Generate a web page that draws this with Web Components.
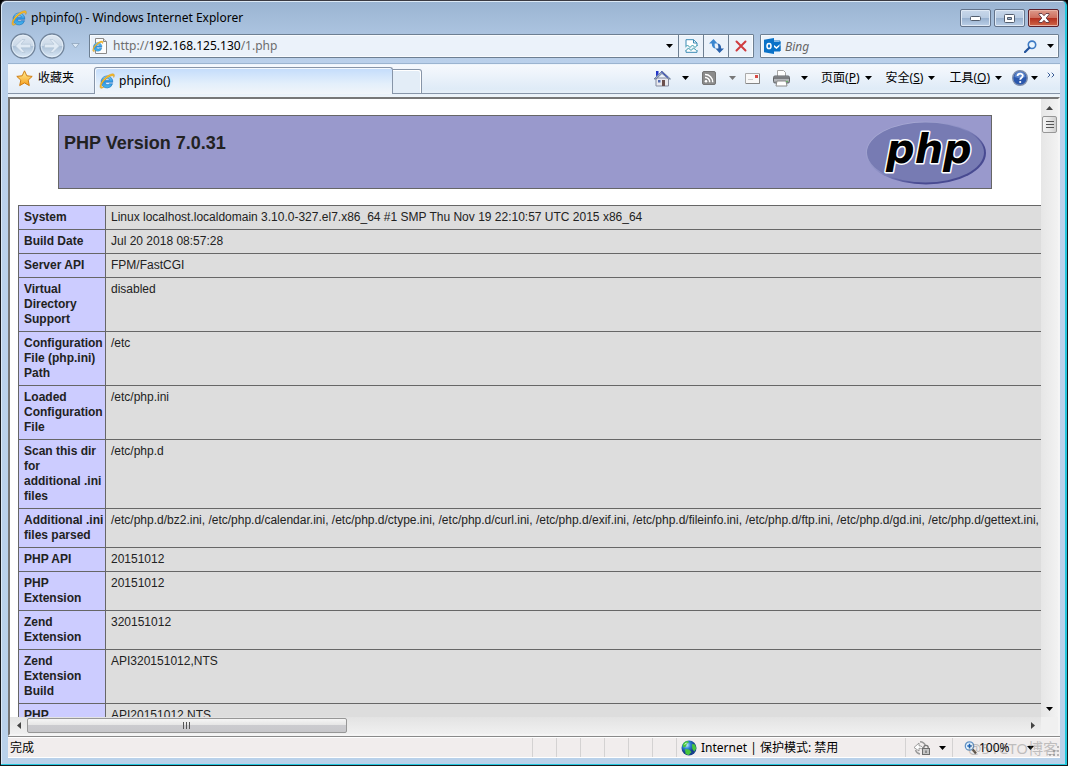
<!DOCTYPE html>
<html lang="zh-CN">
<head>
<meta charset="utf-8">
<title>phpinfo() - Windows Internet Explorer</title>
<style>
html, body { margin: 0; height: 100%; overflow: hidden; }
body { font: 12px/16px "Noto Sans", "Noto Sans CJK SC", sans-serif; color: #000; background: #000; }
</style>
</head>
<body>
<browser-window>
  <title-bar slot="title">phpinfo() - Windows Internet Explorer</title-bar>
  <nav-bar slot="nav"></nav-bar>
  <command-bar slot="commands"></command-bar>
  <scroll-view slot="view"><php-info></php-info></scroll-view>
  <status-bar slot="status"></status-bar>
</browser-window>
<script>
const IE = `<path d="M2.2 10.2a5.9 5.9 0 1 1 11.6-.9H6.2c.2 1.5 1.1 2.3 2.4 2.3.8 0 1.4-.3 1.8-.9h3.2A5.9 5.9 0 0 1 8.3 15C5 15 2.700 13 2.200 10.200zM6.200 7.200h4.200C10.200 6 9.400 5.300 8.300 5.300S6.400 6 6.200 7.200z" fill="url(#ie)" stroke="#1565b4" stroke-width=".5"/><path d="M1.700 15.200C-.5 13.500 2.500 7 7.500 3.500 11.200.8 14.700.1 15.300 1.700c.3.700 0 1.700-.6 2.800.2-1-.1-1.700-1-1.800-1.600-.2-4.200 1.100-6.700 3.200C4 8.500 1.600 12.300 2.500 13.800c.4.600 1.300.5 2.600-.1-1.400 1.200-2.700 1.900-3.400 1.500z" fill="#f8bd2c" stroke="#c78a13" stroke-width=".4"/><defs><linearGradient id="ie" x2="0" y2="1"><stop stop-color="#7bd3fa"/><stop offset=".5" stop-color="#2a94e2"/><stop offset="1" stop-color="#49b9ee"/></linearGradient></defs>`;
const CIRCLE = `<defs><linearGradient id="b" x2="0" y2="1"><stop stop-color="#dfe8f2"/><stop offset=".48" stop-color="#cbd9e8"/><stop offset=".52" stop-color="#adc2d8"/><stop offset="1" stop-color="#dceaf7"/></linearGradient></defs><circle cx="13" cy="13" r="12" fill="url(#b)" stroke="#71849b" stroke-width="1.300"/><circle cx="13" cy="13" r="10.800" fill="none" stroke="#edf5fc" opacity=".7"/>`;
const ICONS = {
  ie: [16, 16, IE],
  page: [16, 16, `<path d="M3.500.500h8l3 3v12h-11z" fill="#fdfdfd" stroke="#8a8a8a"/><path d="M11.500.500v3h3" fill="#ddd" stroke="#8a8a8a"/><g transform="translate(0 2.500) scale(.72)">${IE}</g>`],
  back: [26, 26, `${CIRCLE}<path d="M5.500 13l6.500-6.500h3l-4 4.700h9.500v3.600H11l4 4.700h-3z" fill="#e0eaf4" stroke="#b4c5d7" stroke-width=".7"/>`],
  forward: [26, 26, `${CIRCLE}<path d="M20.500 13L14 6.500h-3l4 4.700H5.500v3.600H15l-4 4.700h3z" fill="#e0eaf4" stroke="#b4c5d7" stroke-width=".7"/>`],
  recent: [9, 6, `<path d="M.8.500h7.400L4.500 5z" fill="#dce9f6" stroke="#8fa5bd" stroke-width=".8"/>`],
  down: [7, 4, `<path d="M0 0h7L3.500 4z" fill="currentColor"/>`],
  compat: [13, 14, `<path d="M1 7V.700h7.500L12 4v3M1 11v2.300h11V11" fill="#fff" stroke="#3b8ab4"/><path d="M8.500.700V4H12" fill="none" stroke="#3b8ab4"/><path d="M0 8.500L2.500 6 5 8.500 7.500 6 10 8.500l2.500-2.500M1 11.500L3.500 9 6 11.500 8.500 9l3 2.500" fill="none" stroke="#3b9cab"/>`],
  refresh: [15, 14, `<path d="M4.500 0L0 4.500h2.800C2.800 8 4.200 9.500 7 9.500 5.600 8.300 5.500 6.500 5.700 4.500H8.500z" fill="#3b86cf"/><path d="M10.500 14l4.500-4.500h-2.800C12.200 6 10.800 4.500 8 4.500c1.400 1.200 1.500 3 1.300 5H6.500z" fill="#2a62ac"/>`],
  stop: [12, 12, `<path d="M1.500 1.500l9 9M10.500 1.500l-9 9" stroke="#cf3b3f" stroke-width="2" stroke-linecap="round"/>`],
  outlook: [17, 16, `<path d="M9 3h7v10H9z" fill="#fff" stroke="#0a72c8"/><path d="M10 4h6.500v1.500L12.500 9 10 7z" fill="#0a72c8"/><path d="M10 9l2.500 2 4-3.500V13H10z" fill="#0a72c8"/><path d="M0 1.800L10 0v16L0 14.200z" fill="#0a72c8"/><ellipse cx="5" cy="8" rx="2" ry="2.600" fill="none" stroke="#fff" stroke-width="1.500"/>`],
  search: [13, 13, `<circle cx="8" cy="4.800" r="3.700" fill="#eaf6ff" stroke="#3d7ac4" stroke-width="1.600"/><path d="M5.300 7.700L1 12" stroke="#22539b" stroke-width="2.200" stroke-linecap="round"/>`],
  star: [17, 17, `<path d="M8.500.800l2.300 5 5.400.6-4 3.700 1.100 5.500-4.800-2.700-4.800 2.700 1.100-5.500-4-3.700 5.400-.6z" fill="url(#s)" stroke="#cf7d12" stroke-width="1"/><defs><linearGradient id="s" x2="0" y2="1"><stop stop-color="#fff19a"/><stop offset="1" stop-color="#f69d19"/></linearGradient></defs>`],
  home: [18, 17, `<path d="M3 8h12.500v8H3z" fill="#e9e9ee" stroke="#858b9f"/><path d="M9 1L1 9h2l6-5.500L15.500 9h2z" fill="#9dabc9" stroke="#596887" stroke-width=".7"/><path d="M3 1h2.500v3L3 6.500z" fill="#2337c8"/><path d="M9 10h3v6H9z" fill="#6b504e"/><path d="M5 10h2.500v2.500H5z" fill="#526ab0"/><path d="M8 1.500l7 6" stroke="#3246bb"/>`],
  rss: [14, 14, `<rect x=".5" y=".5" width="13" height="13" rx="1.500" fill="#8b8b8b" stroke="#757575"/><circle cx="4" cy="10.200" r="1.300" fill="#fff"/><path d="M3 6.500a4.500 4.500 0 0 1 4.700 4.700M3 3.500a7.500 7.500 0 0 1 7.700 7.700" fill="none" stroke="#fff" stroke-width="1.500"/>`],
  mail: [15, 11, `<path d="M.500.500h14v10H.500z" fill="#f8f8f8" stroke="#aaa"/><path d="M1 10.500h13.500V1" fill="none" stroke="#858585"/><path d="M10 2h3v3h-3z" fill="#d94b45"/><path d="M3 6.500h5" stroke="#ccc"/>`],
  printer: [17, 17, `<path d="M4.500 7V.500h6l2 2V7" fill="#fff" stroke="#a5a5a5"/><rect x=".5" y="6" width="16" height="7" rx="1.500" fill="#9a9da1" stroke="#606468"/><path d="M1 8h15" stroke="#5a5c60"/><path d="M1 10h15" stroke="#c9ccd0"/><path d="M4 11h9l1 5H3z" fill="#fff" stroke="#8a8a8a"/><circle cx="14" cy="11.500" r=".8" fill="#53ba51"/>`],
  help: [16, 16, `<circle cx="8" cy="8" r="7.300" fill="#2a57ad" stroke="#7e8eac" stroke-width="1.400"/><path d="M2.500 7a5.500 5.500 0 0 1 11 0q-5 2-11 0z" fill="#7fa5e2" opacity=".6"/><path d="M5.500 6c.2-3 5.300-3 5.300-.2C10.800 7.700 8.200 7.700 8.200 9.800" fill="none" stroke="#fff" stroke-width="1.800"/><circle cx="8.200" cy="12" r="1.100" fill="#fff"/>`],
  more: [8, 6, `<path d="M.700.700L3 3 .700 5.300M4.700.700L7 3 4.700 5.300" fill="none" stroke="#3c5d96"/>`],
  min: [11, 5, `<rect x=".5" y=".5" width="10" height="4" rx="1" fill="#fff" stroke="#525d6d"/>`],
  max: [11, 9, `<rect x=".5" y=".5" width="10" height="8" rx="1" fill="#fff" stroke="#525d6d"/><path d="M3.500 3.500h4v2h-4z" fill="#9fb4cc" stroke="#525d6d"/>`],
  close: [12, 10, `<path d="M1 .500h3l2 2.200 2-2.200h3v1.200L8.200 5 11 8.300v1.200H8L6 7.300 4 9.500H1V8.300L3.800 5 1 1.700z" fill="#fff" stroke="#5b3540" stroke-width=".9"/>`],
  globe: [16, 16, `<defs><radialGradient id="g" cx=".35" cy=".3"><stop stop-color="#c9f0ff"/><stop offset=".5" stop-color="#2e83d3"/><stop offset="1" stop-color="#17408d"/></radialGradient></defs><circle cx="8" cy="8" r="7.500" fill="url(#g)"/><path d="M1.500 5c1-2.500 3-4 5.500-4l1 1.500-2 1-1 3-2.500 1zM11 4l3 .5 1.300 4-2 3-2-2.500zM4 9l4 .5 2.500 2.500-3 3.200-3-1.500z" fill="#48c63c"/><path d="M3 5c.7-1.500 2-2.500 3.500-2.500L5 4z" fill="#e5ffe0"/>`],
  lock: [17, 14, `<path d="M6 .800a6 6 0 0 1 5.500 4M6 13A6 6 0 0 1 1.500 9" fill="none" stroke="#9a9a9a" stroke-width="1.400"/><path d="M0 6.500L5 2v2.800c3 0 4 1.500 4 4-1.200-1.300-2.300-1.600-4-1.500V10z" fill="#fff" stroke="#888" stroke-width=".8"/><path d="M9.800 8V6.500a2.200 2.200 0 0 1 4.400 0V8" fill="none" stroke="#777" stroke-width="1.300"/><rect x="8.500" y="7.500" width="7" height="6" fill="#c4c4c4" stroke="#6d6d6d"/><path d="M12 9.500v2.500" stroke="#555"/>`],
  zoom: [13, 14, `<circle cx="5.500" cy="5" r="4.200" fill="#e6f4ff" stroke="#6593c4" stroke-width="1.300"/><path d="M3.300 5h4.400M5.500 2.800v4.400" stroke="#1b61b8" stroke-width="1.500"/><path d="M8.700 8.500L12 12.500" stroke="#5c5146" stroke-width="2.300"/>`],
  left: [4, 7, `<path d="M4 0v7L0 3.500z" fill="#444"/>`],
  right: [4, 7, `<path d="M0 0v7l4-3.500z" fill="#444"/>`],
  up: [7, 4, `<path d="M0 4h7L3.500 0z" fill="#444"/>`],
  grip: [12, 12, `<path d="M9 0h2v2H9zM9 4h2v2H9zM9 8h2v2H9zM5 4h2v2H5zM5 8h2v2H5zM1 8h2v2H1z" fill="#b9b6b6"/>`],
  phplogo: [122, 66, `<defs><linearGradient id="p" x2="1" y2="1"><stop stop-color="#b9badd"/><stop offset=".45" stop-color="#8c8fc4"/><stop offset=".7" stop-color="#484a91"/><stop offset="1" stop-color="#484a91"/></linearGradient></defs><ellipse cx="61" cy="33" rx="60" ry="31.500" fill="url(#p)"/><ellipse cx="60.500" cy="32.500" rx="58.500" ry="30" fill="#777bb3"/><text x="21" y="43" font-family="DejaVu Sans, sans-serif" font-size="40" font-weight="700" font-style="italic" fill="#000" stroke="#fff" stroke-width="3" stroke-linejoin="round" paint-order="stroke">php</text>`]
};

const RESET = `
  :host, *, *::before, *::after { box-sizing: border-box; }
  button { font: inherit; color: inherit; border: 0; background: none; padding: 0; margin: 0; display: flex; align-items: center; justify-content: center; }
`;

class Base extends HTMLElement {
  constructor() {
    super();
    this.attachShadow({ mode: 'open' });
  }
  connectedCallback() {
    this.shadowRoot.innerHTML = `<style>${RESET}${this.styles()}</style>${this.markup()}`;
  }
}

customElements.define('ui-icon', class extends Base {
  styles() { return `:host { display: block; flex: none; line-height: 0; } svg { display: block; }`; }
  markup() {
    const [w, h, body] = ICONS[this.getAttribute('name')];
    return `<svg width="${w}" height="${h}" viewBox="0 0 ${w} ${h}" aria-hidden="true">${body}</svg>`;
  }
});

customElements.define('browser-window', class extends Base {
  styles() { return `
    :host { display: flex; flex-direction: column; height: 100vh;
      padding: 0 7px 7px; border: 1px solid #17191d; border-top-color: #3a3a42; border-radius: 6px 6px 0 0;
      background: linear-gradient(#9ab4d2, #bcd2ec 64px, #b9d1ea);
      box-shadow: inset -2px -1px #22c7dd, inset 1px 1px #dce9f6; }
    main { flex: 1; min-height: 0; display: flex; }
    ::slotted([slot=view]) { flex: 1; min-width: 0; }`; }
  markup() { return `<slot name="title"></slot><slot name="nav"></slot><slot name="commands"></slot><main><slot name="view"></slot></main><slot name="status"></slot>`; }
});

customElements.define('title-bar', class extends Base {
  styles() { return `
    :host { display: flex; align-items: center; height: 32px; padding: 2px 1px 0 3px; gap: 4px; flex: none; }
    h1 { font: inherit; margin: 0; flex: 1; }
    .buttons { display: flex; gap: 3px; }
    .buttons button { width: 31px; height: 18px; border: 1px solid #63738a; border-radius: 2px;
      background: linear-gradient(#c9d8ea, #b8cbe2 48%, #98b1cf 52%, #bcd0e8); box-shadow: inset 0 0 0 1px #dfe9f5; }
    .buttons .close { border-color: #5b1f2a; background: linear-gradient(#dd9a8b, #cf6f5e 48%, #b4301f 52%, #cf6748); box-shadow: inset 0 0 0 1px #e8b2a5; }`; }
  markup() { return `<ui-icon name="ie"></ui-icon><h1><slot></slot></h1>
    <div class="buttons"><button aria-label="Minimize"><ui-icon name="min"></ui-icon></button>
    <button aria-label="Maximize"><ui-icon name="max"></ui-icon></button>
    <button class="close" aria-label="Close"><ui-icon name="close"></ui-icon></button></div>`; }
});

customElements.define('nav-bar', class extends Base {
  styles() { return `
    :host { display: flex; align-items: center; height: 31px; padding: 0 1px 5px 2px; flex: none; }
    .travel { display: flex; align-items: center; gap: 3px; margin-right: 9px; }
    .travel button:last-child { margin-left: 3px; }
    .box { display: flex; height: 24px; border: 1px solid #6d7f92; background: #ebf2fa; box-shadow: inset 0 0 0 1px #f8fbfe; border-radius: 1px; }
    .address { flex: 1; min-width: 0; margin-right: 6px; align-items: center; padding-left: 2px; }
    .address button { align-self: stretch; width: 25px; border-left: 1px solid #6d7f92; }
    .address button.drop { width: 18px; border: 0; }
    input { font: inherit; border: 0; background: none; outline: 0; padding: 0 0 0 4px; min-width: 0; flex: 1; height: 20px; }
    .url { color: #6d6d6d; flex: 1; padding-left: 5px; outline: 0; white-space: nowrap; overflow: hidden; }
    .url b { font-weight: 400; color: #000; }
    .search { width: 28.5%; align-items: center; padding: 0 4px 0 3px; }
    .search input::placeholder { font-style: italic; color: #666; opacity: 1; }
    .search button:last-child { margin-left: 10px; }`; }
  markup() { return `
    <div class="travel"><button aria-label="Back"><ui-icon name="back"></ui-icon></button><button aria-label="Forward"><ui-icon name="forward"></ui-icon></button><button aria-label="Recent pages"><ui-icon name="recent"></ui-icon></button></div>
    <div class="box address"><ui-icon name="page"></ui-icon>
      <div class="url" role="textbox" aria-label="Address" contenteditable="true" spellcheck="false">http://<b>192.168.125.130</b>/1.php</div>
      <button class="drop" aria-label="Address history"><ui-icon name="down"></ui-icon></button>
      <button aria-label="Compatibility view"><ui-icon name="compat"></ui-icon></button><button aria-label="Refresh"><ui-icon name="refresh"></ui-icon></button><button aria-label="Stop"><ui-icon name="stop"></ui-icon></button></div>
    <div class="box search"><ui-icon name="outlook"></ui-icon><input type="search" placeholder="Bing" aria-label="Search">
      <button aria-label="Search"><ui-icon name="search"></ui-icon></button><button aria-label="Search options"><ui-icon name="down"></ui-icon></button></div>`; }
});

customElements.define('command-bar', class extends Base {
  styles() { return `
    :host { display: flex; height: 33px; flex: none; padding-bottom: 3px; background: linear-gradient(#f6f9fd, #dfebf7 24px, #eff5fa); border-top: 1px solid #eef5fc; box-shadow: 0 -1px #9bb4d0; }
    .fav { width: 86px; gap: 5px; padding: 0 12px 2px 8px; border-bottom: 1px solid #8795a8; background: linear-gradient(#f5f8fc, #e4edf7); justify-content: flex-start; }
    .tab { flex: 0 1 299px; min-width: 120px; margin-top: 2px; gap: 4px; padding: 0 4px; justify-content: flex-start; border: 1px solid #8795a8; border-bottom: 0; border-radius: 3px 3px 0 0; background: linear-gradient(#c3dcfb, #e3effb 60%, #f1f5f9); box-shadow: inset 1px 1px #f4f9fe; }
    .new { width: 29px; margin-top: 4px; border: 1px solid #8795a8; border-left: 0; border-radius: 0 3px 0 0; background: #e3edf7; box-shadow: inset -1px 1px #fff; }
    .tools { flex: 1; display: flex; align-items: center; justify-content: flex-end; padding: 0 5px 2px 0; border-bottom: 1px solid #8795a8; white-space: nowrap; }
    .tools button { height: 20px; }
    .split { gap: 11px; margin-right: 13px; }
    .menu { gap: 5px; margin-right: 14px; }
    .menu.last { margin-right: 10px; }
    .mail { margin-right: 13px; }
    .help { gap: 3px; margin-right: 9px; }
    .dim ui-icon + ui-icon { color: #777; }
    .dim { gap: 13px; margin-right: 9px; }
    .more { align-self: flex-start; }`; }
  markup() { return `
    <button class="fav"><ui-icon name="star"></ui-icon>收藏夹</button>
    <button class="tab"><ui-icon name="ie"></ui-icon>phpinfo()</button>
    <button class="new" aria-label="New tab"></button>
    <div class="tools">
      <button class="split" aria-label="Home"><ui-icon name="home"></ui-icon><ui-icon name="down"></ui-icon></button>
      <button class="split dim" aria-label="Feeds"><ui-icon name="rss"></ui-icon><ui-icon name="down"></ui-icon></button>
      <button class="mail" aria-label="Read mail"><ui-icon name="mail"></ui-icon></button>
      <button class="split" aria-label="Print"><ui-icon name="printer"></ui-icon><ui-icon name="down"></ui-icon></button>
      <button class="menu"><span>页面(<u>P</u>)</span><ui-icon name="down"></ui-icon></button>
      <button class="menu"><span>安全(<u>S</u>)</span><ui-icon name="down"></ui-icon></button>
      <button class="menu last"><span>工具(<u>O</u>)</span><ui-icon name="down"></ui-icon></button>
      <button class="help" aria-label="Help"><ui-icon name="help"></ui-icon><ui-icon name="down"></ui-icon></button>
      <button class="more" aria-label="More"><ui-icon name="more"></ui-icon></button>
    </div>`; }
});

customElements.define('scroll-view', class extends Base {
  styles() { return `
    :host { display: grid; grid-template: minmax(0, 1fr) 17px / minmax(0, 1fr) 17px; background: #f0f0f0; border: 2px solid #777; border-right-color: #f5f5f5; border-bottom-color: #f5f5f5; }
    .page { overflow: auto; scrollbar-width: none; background: #fff; }
    .v, .h { display: flex; align-items: center; background: linear-gradient(90deg, #e6e6e6, #f2f2f2); }
    .v { flex-direction: column; }
    .h { background: linear-gradient(#e3e3e3, #f0f0f0); }
    .v button { width: 17px; height: 17px; }
    .h button { width: 17px; height: 17px; }
    .thumb { border: 1px solid #979797; border-radius: 2px; display: flex; align-items: center; justify-content: center; gap: 2px; }
    .v .thumb { flex-direction: column; width: 15px; height: 17px; background: linear-gradient(90deg, #f5f5f5, #e6e6e6 50%, #cfcfcf); }
    .h .thumb { width: 31%; height: 15px; background: linear-gradient(#f5f5f5, #e6e6e6 45%, #cbcbcf 50%, #c8c8cb); }
    .thumb i { width: 1px; height: 7px; background: #555; }
    .v .thumb i { width: 8px; height: 1px; }
    .space { flex: 1; }`; }
  markup() { return `
    <div class="page"><slot></slot></div>
    <div class="v"><button aria-label="Up"><ui-icon name="up"></ui-icon></button><div class="thumb"><i></i><i></i><i></i></div><div class="space"></div><button aria-label="Down"><ui-icon name="down"></ui-icon></button></div>
    <div class="h"><button aria-label="Left"><ui-icon name="left"></ui-icon></button><div class="thumb"><i></i><i></i><i></i></div><div class="space"></div><button aria-label="Right"><ui-icon name="right"></ui-icon></button></div>`; }
});

const ROWS = [
  ['System', 'Linux localhost.localdomain 3.10.0-327.el7.x86_64 #1 SMP Thu Nov 19 22:10:57 UTC 2015 x86_64'],
  ['Build Date', 'Jul 20 2018 08:57:28'],
  ['Server API', 'FPM/FastCGI'],
  ['Virtual\nDirectory\nSupport', 'disabled'],
  ['Configuration\nFile (php.ini)\nPath', '/etc'],
  ['Loaded\nConfiguration\nFile', '/etc/php.ini'],
  ['Scan this dir\nfor\nadditional .ini\nfiles', '/etc/php.d'],
  ['Additional .ini\nfiles parsed', ['bz2', 'calendar', 'ctype', 'curl', 'exif', 'fileinfo', 'ftp', 'gd', 'gettext'].map(n => `/etc/php.d/${n}.ini,`).join(' ')],
  ['PHP API', '20151012'],
  ['PHP\nExtension', '20151012'],
  ['Zend\nExtension', '320151012'],
  ['Zend\nExtension\nBuild', 'API320151012,NTS'],
  ['PHP', 'API20151012,NTS']
];

customElements.define('php-info', class extends Base {
  styles() { return `
    :host { display: block; padding: 16px 0 0 8px; font: 12px/15px "Liberation Sans", Arial, sans-serif; color: #222; }
    header { display: flex; justify-content: space-between; align-items: flex-start; height: 74px; margin: 0 49px 16px 40px; padding: 4px 4px 4px 5px; border: 1px solid #666; background: #9999cc; }
    h1 { font-size: 18px; line-height: 22px; margin: 12px 0 0; }
    table { width: 120%; table-layout: fixed; border-collapse: collapse; }
    col:first-child { width: 87px; }
    th, td { border: 1px solid #666; padding: 4px 0 4px 5px; text-align: left; vertical-align: top; white-space: pre; }
    th { background: #ccccff; }
    td { background: #ddd; }`; }
  markup() { return `
    <header><h1>PHP Version 7.0.31</h1><ui-icon name="phplogo"></ui-icon></header>
    <table><colgroup><col><col></colgroup><tbody>${ROWS.map(([k, v]) => `<tr><th scope="row">${k}</th><td>${v}</td></tr>`).join('')}</tbody></table>`; }
});

customElements.define('status-bar', class extends Base {
  styles() { return `
    :host { display: flex; position: relative; height: 22px; flex: none; background: #f1eded; border-top: 1px solid #8a8a8a; box-shadow: inset 0 1px #fff, inset 0 -1px #fff; padding: 1px 0; align-items: stretch; }
    div { display: flex; align-items: center; }
    .msg { flex: 1; padding-left: 2px; }
    .cell, .zone, .lock, .zoom { border-left: 1px solid #d4d2d2; }
    .cell { width: 24px; }
    .zone { width: 229px; gap: 4px; padding-left: 4px; }
    .lock { width: 47px; padding-left: 8px; }
    .lock button { gap: 8px; }
    .zoom { width: 108px; padding-left: 11px; }
    .zoom button { gap: 2px; }
    .zoom .drop { margin-left: 17px; }
    .grip { position: absolute; right: 0; bottom: 0; }
    .mark { position: absolute; right: 2px; top: 0; font-size: 15px; line-height: 22px; color: #777; opacity: .4; white-space: nowrap; }`; }
  markup() { return `
    <div class="msg" role="status">完成</div>
    ${'<div class="cell"></div>'.repeat(6)}
    <div class="zone"><ui-icon name="globe"></ui-icon><span>Internet | 保护模式: 禁用</span></div>
    <div class="lock"><button aria-label="Privacy"><ui-icon name="lock"></ui-icon><ui-icon name="down"></ui-icon></button></div>
    <div class="zoom"><button><ui-icon name="zoom"></ui-icon>100%</button><button class="drop" aria-label="Zoom level"><ui-icon name="down"></ui-icon></button></div>
    <ui-icon class="grip" name="grip"></ui-icon>
    <span class="mark">@51CTO博客</span>`; }
});
</script>
</body>
</html>
